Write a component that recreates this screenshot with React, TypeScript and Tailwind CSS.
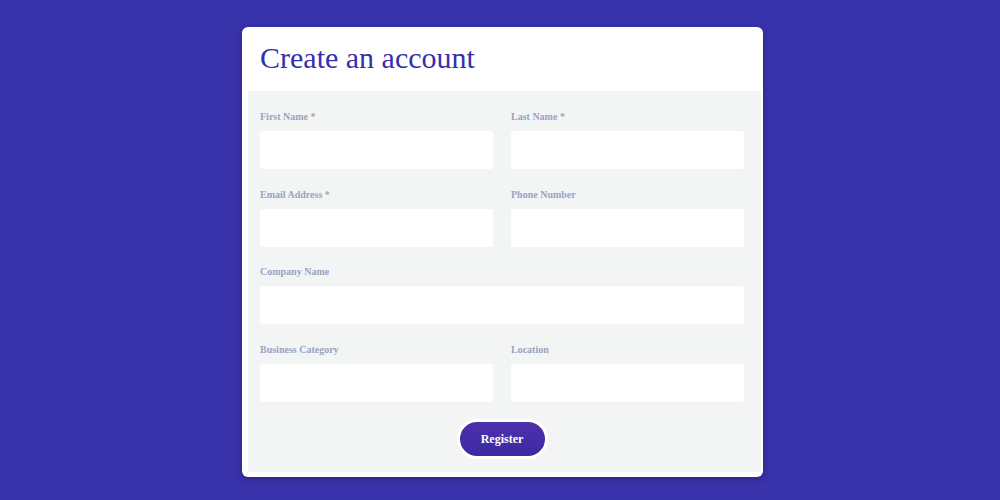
import React from "react";

const Field = ({ label, full }: { label: string; full?: boolean }) => (
  <div className={full ? "col-span-2 flex flex-col" : "flex flex-col"}>
    <label className="text-[10px] font-bold leading-[12px] text-[#9aa2c2] h-[12px]">{label}</label>
    <div className="mt-[8px] h-[38px] rounded-[3px] bg-white" />
  </div>
);

export default function App() {
  return (
    <div
      className="w-[1000px] h-[500px] bg-[#3832ab] flex justify-center pt-[27px] pl-[5px]"
      style={{ fontFamily: '"Liberation Serif", "Times New Roman", serif' }}
    >
      <div className="w-[521px] h-[450px] bg-white rounded-[6px] flex flex-col shadow-[0_2px_6px_rgba(0,0,0,0.25)]">
        <div className="h-[64px] flex items-center px-[18px] shrink-0">
          <h1 className="text-[30px] leading-none text-[#3430ad] pb-[2px]">Create an account</h1>
        </div>
        <div className="flex-1 bg-[#f3f5f5] ml-[6px] mr-[2px] mb-[5px] px-[12px] pt-[20px]">
          <div className="grid grid-cols-2 gap-x-[18px] gap-y-[19.6px] w-[484px]">
            <Field label="First Name *" />
            <Field label="Last Name *" />
            <Field label="Email Address *" />
            <Field label="Phone Number" />
            <Field label="Company Name" full />
            <Field label="Business Category" />
            <Field label="Location" />
          </div>
          <div className="flex justify-center mt-[17px] w-[484px]">
            <button className="w-[91px] h-[40px] rounded-full border-[3px] border-white bg-gradient-to-b from-[#4f2fab] to-[#3a2ba3] text-white text-[12px] font-bold">
              Register
            </button>
          </div>
        </div>
      </div>
    </div>
  );
}
